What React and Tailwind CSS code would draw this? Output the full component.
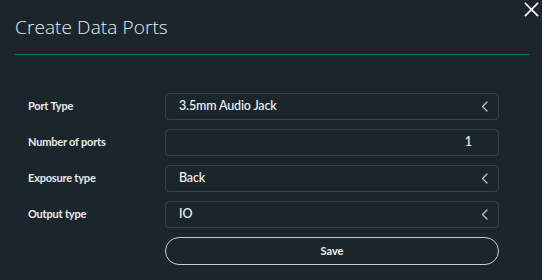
const rows = [
    { label: 'Port Type', value: '3.5mm Audio Jack', select: true },
    { label: 'Number of ports', value: '1', select: false },
    { label: 'Exposure type', value: 'Back', select: true },
    { label: 'Output type', value: 'IO', select: true },
];

function Chevron() {
    return (
        <svg width="7" height="11" viewBox="0 0 7 11" fill="none" stroke="#b9c0c3" strokeWidth="1.3" strokeLinecap="round" strokeLinejoin="round">
            <polyline points="6,1 1.5,5.5 6,10" />
        </svg>
    );
}

export default function App() {
    return (
        <div className="relative w-[542px] h-[280px] bg-[#1b262c] text-white overflow-hidden" style={{ fontFamily: 'Lato, "Open Sans", sans-serif' }}>
            <button className="absolute top-[2px] left-[524px]">
                <svg width="15" height="15" viewBox="0 0 15 15" stroke="#ffffff" strokeWidth="1.7" strokeLinecap="square">
                    <line x1="1.5" y1="1.5" x2="13.5" y2="13.5" />
                    <line x1="13.5" y1="1.5" x2="1.5" y2="13.5" />
                </svg>
            </button>

            <div className="px-[15px] pt-[14px] pr-[13px]">
                <h1 className="text-[19px] leading-[26px] text-[#e9eef0] tracking-[0.1px]" style={{ fontFamily: '"Open Sans", sans-serif', fontWeight: 300 }}>
                    Create Data Ports
                </h1>
                <div className="mt-[14px] h-px bg-[#16727a]" />
            </div>

            <div className="pl-[28px] pt-[38px] flex flex-col gap-[9px]">
                {rows.map(row => (
                    <div key={row.label} className="flex items-center">
                        <span className="w-[137px] text-[11px] font-bold text-[#e6eaec] tracking-[-0.2px]">
                            {row.label}
                        </span>
                        <div className="w-[334px] h-[27px] border border-[#38444a] rounded-[4px] flex items-center pl-[13px] pr-[10px]">
                            {row.select ? (
                                <>
                                    <span className="flex-1 text-[12.5px] font-medium tracking-[-0.15px] text-[#f4f6f7]">{row.value}</span>
                                    <Chevron />
                                </>
                            ) : (
                                <span className="flex-1 text-right pr-[16px] text-[12.5px] font-medium text-[#f4f6f7]">{row.value}</span>
                            )}
                        </div>
                    </div>
                ))}
                <div className="flex">
                    <div className="w-[137px]" />
                    <button className="w-[334px] h-[28px] rounded-full border-[1.5px] border-[#c9cdcf] text-[11px] font-bold text-[#eef0f1]">
                        Save
                    </button>
                </div>
            </div>
        </div>
    );
}
